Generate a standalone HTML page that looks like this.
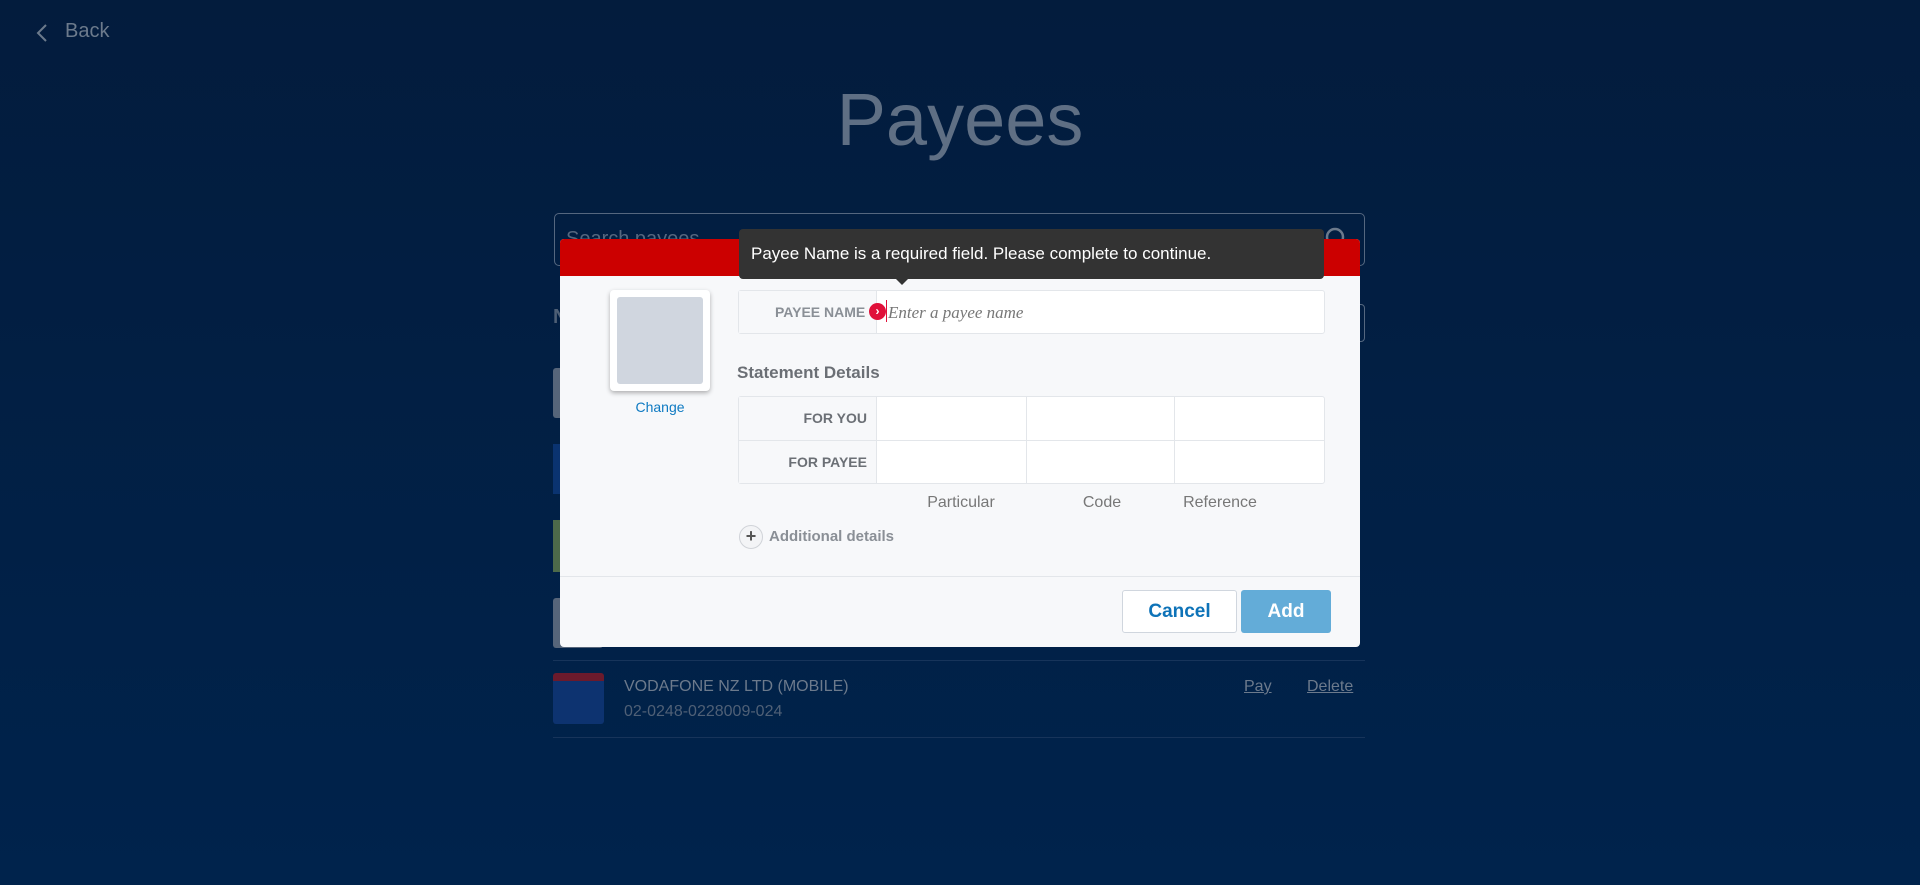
<!DOCTYPE html>
<html><head><meta charset="utf-8"><style>
*{box-sizing:border-box;margin:0;padding:0}
body{width:1920px;height:885px;overflow:hidden;background:linear-gradient(#031c3d,#00234c);font-family:"Liberation Sans",sans-serif;position:relative}
.a{position:absolute}
.dim{color:#6c7a8c}
</style></head><body>
<svg class="a" style="left:34px;top:22px" width="16" height="22" viewBox="0 0 16 22"><path d="M12 3 L4 11 L12 19" stroke="#6c7a8c" stroke-width="2" fill="none"/></svg>
<div class="a dim" style="left:65px;top:20px;font-size:20px">Back</div>
<div class="a dim" style="left:0;width:1920px;top:77px;text-align:center;font-size:74px;color:#5f6f84">Payees</div>
<div class="a" style="left:554px;top:213px;width:811px;height:53px;border:1px solid #55677f;border-radius:5px"></div>
<div class="a" style="left:566px;top:228px;font-size:20px;color:#55677f">Search payees</div>
<svg class="a" style="left:1324px;top:226px" width="24" height="24" viewBox="0 0 24 24"><circle cx="11" cy="11" r="8" stroke="#6c7a8c" stroke-width="2.5" fill="none"/></svg>
<div class="a" style="left:553px;top:306px;color:#4e5f75;font-weight:bold;font-size:20px">N</div>
<div class="a" style="left:1328px;top:304px;width:37px;height:38px;border:1px solid #55677f;border-radius:4px"></div>
<div class="a" style="left:553px;top:368px;width:10px;height:50px;background:#56657a;border-radius:3px"></div>
<div class="a" style="left:553px;top:444px;width:10px;height:50px;background:#0a3370"></div>
<div class="a" style="left:553px;top:520px;width:10px;height:52px;background:#4d6a4a"></div>
<div class="a" style="left:553px;top:598px;width:50px;height:50px;background:#56657a;border-radius:3px"></div>
<div class="a" style="left:553px;top:660px;width:812px;height:1px;background:#17345a"></div>
<div class="a" style="left:553px;top:673px;width:51px;height:51px;background:#0d3370;border-radius:3px;border-top:8px solid #6b1a2c"></div>
<div class="a dim" style="left:624px;top:678px;font-size:16px">VODAFONE NZ LTD (MOBILE)</div>
<div class="a" style="left:624px;top:703px;font-size:16px;color:#4f6076">02-0248-0228009-024</div>
<div class="a dim" style="left:1244px;top:678px;font-size:16px;text-decoration:underline">Pay</div>
<div class="a dim" style="left:1307px;top:678px;font-size:16px;text-decoration:underline">Delete</div>
<div class="a" style="left:553px;top:737px;width:812px;height:1px;background:#17345a"></div>

<div class="a" style="left:560px;top:239px;width:800px;height:408px;background:#f7f8fa;border-radius:4px;overflow:hidden">
 <div style="height:37px;background:#cc0000"></div>
 <div class="a" style="left:50px;top:51px;width:100px;height:101px;background:#fff;border-radius:4px;box-shadow:0 2px 5px rgba(0,0,0,.3)"><div style="margin:7px;height:87px;background:#d0d6df;border-radius:3px"></div></div>
 <div class="a" style="left:50px;top:160px;width:100px;text-align:center;color:#0e7ac2;font-size:14px">Change</div>
 <div class="a" style="left:178px;top:51px;width:587px;height:44px;border:1px solid #e3e6ea;background:#fff;border-radius:3px">
  <div class="a" style="left:0;top:0;width:138px;height:42px;background:#f7f8fa;border-right:1px solid #e3e6ea"></div>
  <div class="a" style="left:36px;top:13px;font-size:14px;font-weight:bold;color:#8a8f96">PAYEE NAME</div>
  <div class="a" style="left:130px;top:12px;width:17px;height:17px;border-radius:50%;background:#e0103a;color:#fff;font-size:12px;text-align:center;line-height:16px;font-weight:bold">›</div>
  <div class="a" style="left:147px;top:9px;width:1px;height:22px;background:#e0103a"></div>
  <div class="a" style="left:149px;top:12px;font-size:17px;font-style:italic;color:#777;font-family:'Liberation Serif',serif">Enter a payee name</div>
 </div>
 <div class="a" style="left:177px;top:124px;font-size:17px;font-weight:bold;color:#6b6f75">Statement Details</div>
 <div class="a" style="left:178px;top:157px;width:587px;height:88px;border:1px solid #e3e6ea;background:#fff;border-radius:3px">
  <div class="a" style="left:0;top:0;width:138px;height:86px;background:#f7f8fa;border-right:1px solid #e3e6ea"></div>
  <div class="a" style="left:0;top:43px;width:585px;height:1px;background:#e3e6ea"></div>
  <div class="a" style="left:287px;top:0;width:1px;height:86px;background:#e3e6ea"></div>
  <div class="a" style="left:435px;top:0;width:1px;height:86px;background:#e3e6ea"></div>
  <div class="a" style="right:457px;top:13px;font-size:14px;font-weight:bold;color:#6b6f75;text-align:right">FOR YOU</div>
  <div class="a" style="right:457px;top:57px;font-size:14px;font-weight:bold;color:#6b6f75;text-align:right">FOR PAYEE</div>
 </div>
 <div class="a" style="left:361px;top:255px;width:80px;text-align:center;font-size:16px;color:#777">Particular</div>
 <div class="a" style="left:502px;top:255px;width:80px;text-align:center;font-size:16px;color:#777">Code</div>
 <div class="a" style="left:620px;top:255px;width:80px;text-align:center;font-size:16px;color:#777">Reference</div>
 <div class="a" style="left:179px;top:286px;width:24px;height:24px;border-radius:50%;border:1px solid #d0d3d8;background:#f3f4f6;text-align:center;line-height:21px;font-size:18px;font-weight:bold;color:#555">+</div>
 <div class="a" style="left:209px;top:289px;font-size:15px;font-weight:bold;color:#8a8f96">Additional details</div>
 <div class="a" style="left:0;top:337px;width:800px;height:1px;background:#e3e6ea"></div>
 <div class="a" style="left:562px;top:351px;width:115px;height:43px;border:1px solid #d0d6de;background:#fff;border-radius:3px;text-align:center;line-height:41px;font-size:19px;font-weight:bold;color:#0e73b8">Cancel</div>
 <div class="a" style="left:681px;top:351px;width:90px;height:43px;background:#63acd8;border-radius:3px;text-align:center;line-height:43px;font-size:19px;font-weight:bold;color:#fff">Add</div>
</div>
<div class="a" style="left:739px;top:229px;width:585px;height:50px;background:#333;border-radius:4px;color:#fff;font-size:17px;padding:15px 0 0 12px">Payee Name is a required field. Please complete to continue.</div>
<div class="a" style="left:896px;top:279px;width:0;height:0;border-left:6px solid transparent;border-right:6px solid transparent;border-top:6px solid #333"></div>
</body></html>
